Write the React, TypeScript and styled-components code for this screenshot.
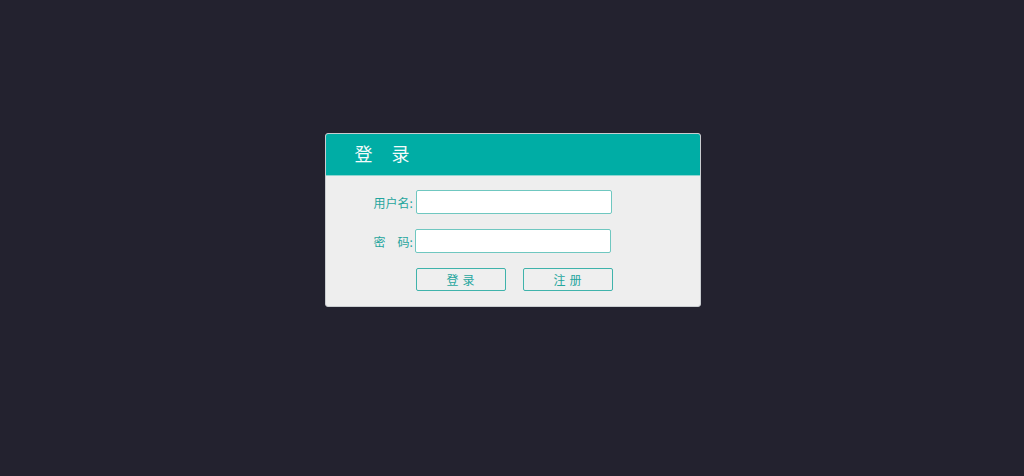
import React from "react";
import styled, { createGlobalStyle } from "styled-components";

const GlobalStyle = createGlobalStyle`
  html, body {
    margin: 0;
    padding: 0;
    height: 100%;
    background: #23222f;
    font-family: "Noto Sans CJK SC", "Noto Sans", sans-serif;
  }
  #root {
    height: 100%;
  }
`;

const Page = styled.div`
  height: 476px;
  display: flex;
  justify-content: center;
  padding-top: 133px;
  box-sizing: border-box;
`;

const Card = styled.div`
  width: 376px;
  height: 174px;
  box-sizing: border-box;
  margin-left: 1px;
  border: 1px solid #c9cdd0;
  border-radius: 3px;
  background: #eeeeee;
  overflow: hidden;
`;

const Header = styled.div`
  height: 42px;
  box-sizing: border-box;
  background: #00ada5;
  border-bottom: 1px solid #8fd6d1;
  display: flex;
  align-items: center;
  padding: 0 0 4px 29px;
`;

const Title = styled.h2`
  margin: 0;
  font-size: 18px;
  font-weight: normal;
  color: #f4fbfb;
  letter-spacing: 19px;
`;

const Body = styled.div`
  padding: 14px 0 0 47px;
  display: flex;
  flex-direction: column;
  gap: 15px;
`;

const Row = styled.div<{ $gap?: number }>`
  display: flex;
  align-items: center;
  height: 24px;
  padding-left: 1px;
  gap: ${({ $gap }) => $gap ?? 3}px;
`;

const Label = styled.label`
  font-size: 12px;
  color: #1fa59d;
  display: flex;
  align-items: center;
  white-space: nowrap;
`;

const Spacer = styled.span`
  display: inline-block;
  width: 12px;
`;

const Input = styled.input`
  width: 196px;
  height: 24px;
  box-sizing: border-box;
  border: 1px solid #6fc7c0;
  border-radius: 2px;
  background: #fff;
  outline: none;
  padding: 0 6px;
`;

const Button = styled.button`
  width: 90px;
  height: 23px;
  box-sizing: border-box;
  border: 1px solid #3fb3ab;
  border-radius: 2px;
  background: #efefef;
  color: #26a69e;
  font-family: inherit;
  font-size: 12px;
  letter-spacing: 4px;
  padding: 0 0 0 4px;
  cursor: pointer;
`;

const Actions = styled.div`
  display: flex;
  gap: 17px;
  padding-left: 43px;
`;

export default function App() {
  return (
    <>
      <GlobalStyle />
      <Page>
        <Card>
          <Header>
            <Title>登录</Title>
          </Header>
          <Body>
            <Row>
              <Label>用户名:</Label>
              <Input type="text" />
            </Row>
            <Row $gap={2}>
              <Label>
                密<Spacer />码:
              </Label>
              <Input type="password" />
            </Row>
            <Actions>
              <Button>登录</Button>
              <Button>注册</Button>
            </Actions>
          </Body>
        </Card>
      </Page>
    </>
  );
}
